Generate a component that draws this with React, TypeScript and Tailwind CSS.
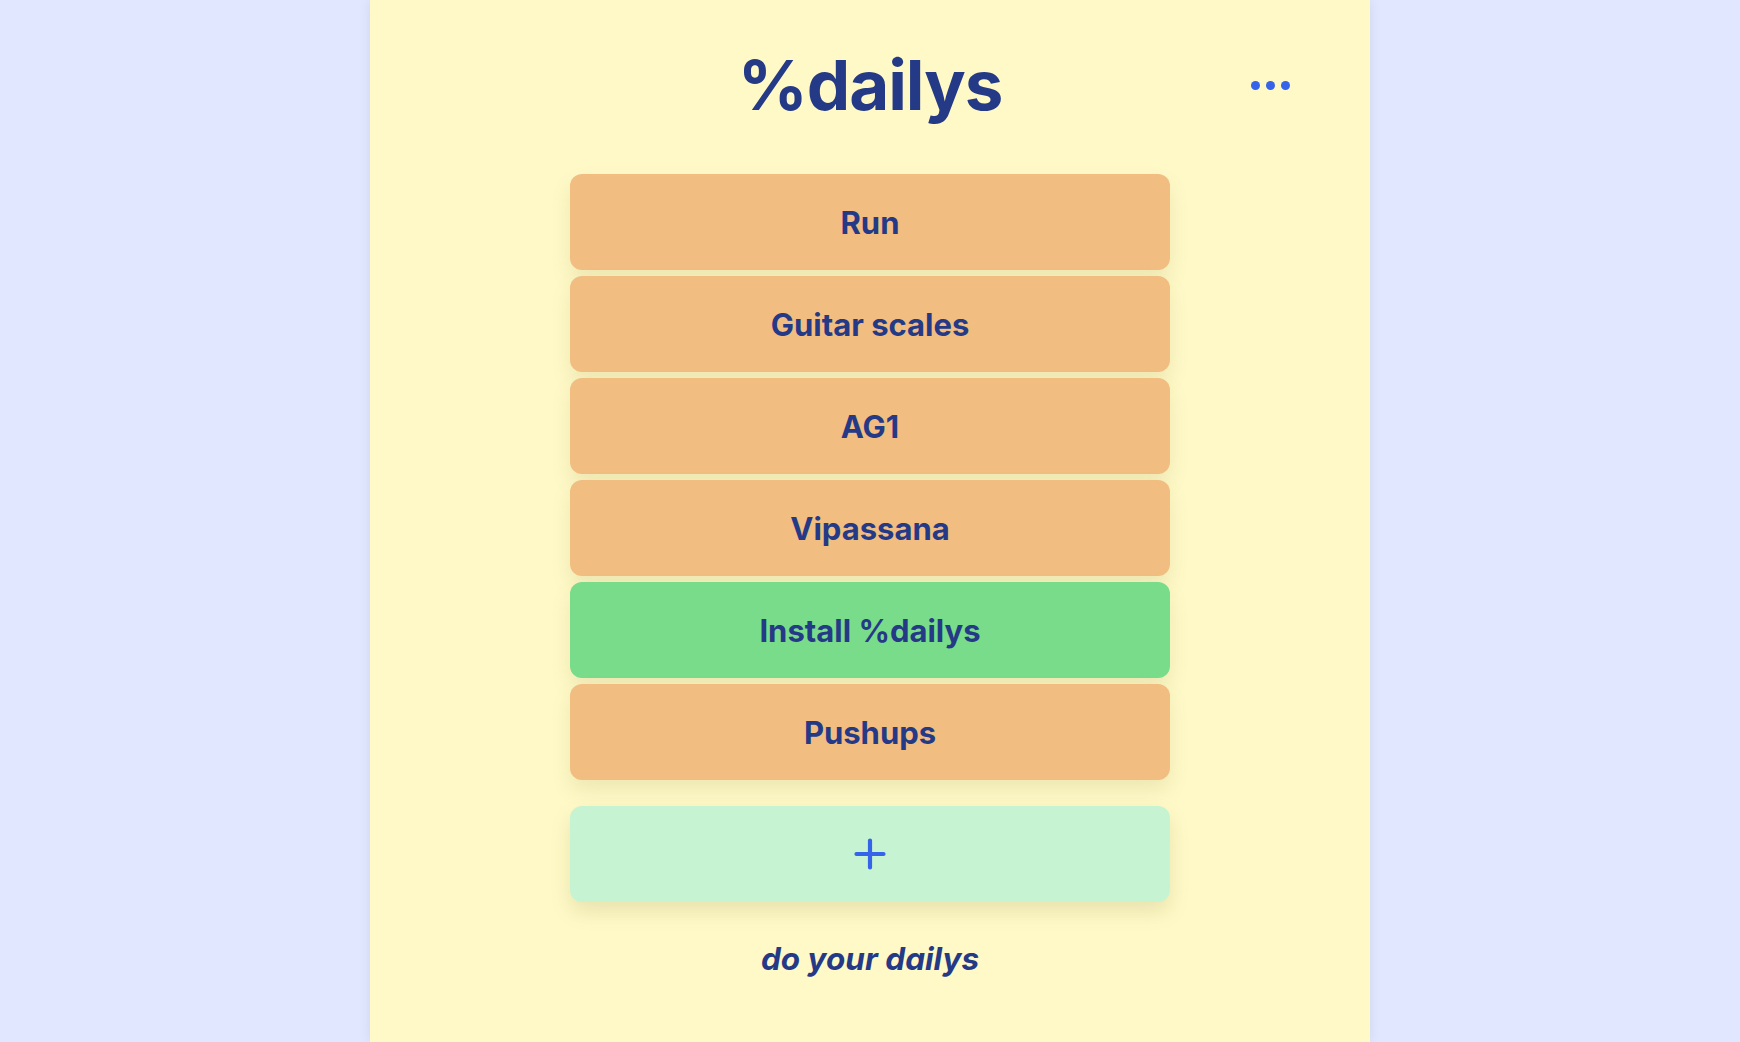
import React from "react";

const items = [
  { name: "Run", done: false },
  { name: "Guitar scales", done: false },
  { name: "AG1", done: false },
  { name: "Vipassana", done: false },
  { name: "Install %dailys", done: true },
  { name: "Pushups", done: false },
];

export default function App() {
  return (
    <div className="min-h-screen bg-[#e0e7fe]" style={{ fontFamily: "Inter, 'Noto Sans', sans-serif" }}>
      <div className="mx-auto w-[1000px] min-h-screen bg-[#fef9c7] shadow-[0_0_12px_rgba(0,0,0,0.08)] flex flex-col items-center pt-[51px]">
        <header className="relative w-full flex justify-center">
          <h1 className="text-[69px] leading-none font-bold text-[#253a86] tracking-[-0.015em]">%dailys</h1>
          <button className="absolute right-[80px] top-[30px] flex gap-[6px]">
            <span className="w-[9px] h-[9px] rounded-full bg-[#3563e9]" />
            <span className="w-[9px] h-[9px] rounded-full bg-[#3563e9]" />
            <span className="w-[9px] h-[9px] rounded-full bg-[#3563e9]" />
          </button>
        </header>
        <div className="mt-[54px] w-[600px] flex flex-col gap-[6px]">
          {items.map((it) => (
            <div
              key={it.name}
              className={`h-[96px] rounded-xl flex items-center justify-center pt-[2px] text-[31px] font-bold text-[#253a86] shadow-[0_10px_20px_rgba(120,110,40,0.12)] ${
                it.done ? "bg-[#79dc8a]" : "bg-[#f2bd80]"
              }`}
            >
              {it.name}
            </div>
          ))}
        </div>
        <div className="mt-[26px] w-[600px] h-[96px] rounded-xl bg-[#c6f4d3] flex items-center justify-center shadow-[0_10px_20px_rgba(120,110,40,0.15)]">
          <svg width="32" height="32" viewBox="0 0 32 32" fill="none">
            <path d="M16 2.5v27M2.5 16h27" stroke="#3563e9" strokeWidth="4.2" strokeLinecap="round" />
          </svg>
        </div>
        <p className="mt-[33px] text-[31.5px] font-bold italic text-[#253a86]">do your dailys</p>
      </div>
    </div>
  );
}
